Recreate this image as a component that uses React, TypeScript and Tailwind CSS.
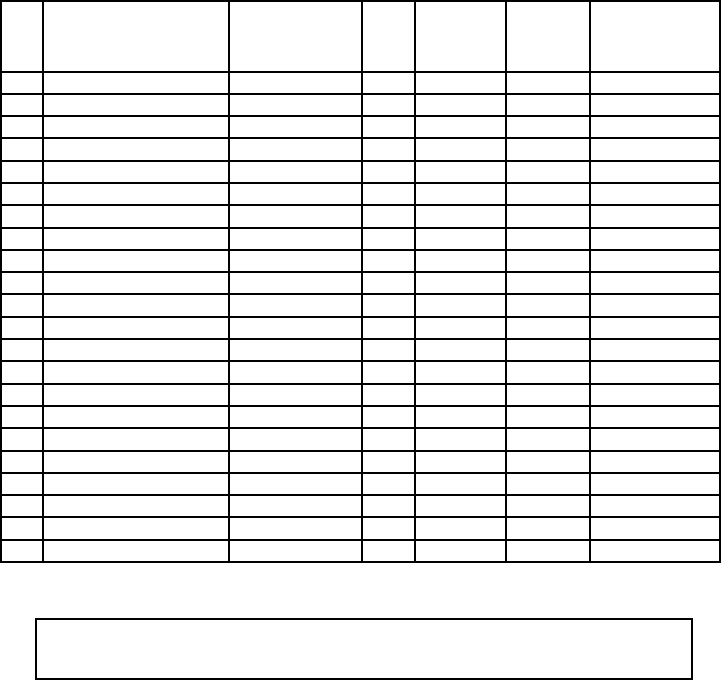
const columns = ["w-[42px]", "w-[186px]", "w-[132.5px]", "w-[53.5px]", "w-[90.5px]", "w-[84px]", "w-[130.5px]"];

const ROW_COUNT = 22;

export default function App() {
  return (
    <div className="w-[721px] h-[680px] bg-white overflow-hidden font-['Liberation_Sans',sans-serif]">
      {/* ledger grid */}
      <div className="flex flex-col w-[721px] border-l-2 border-t-2 border-black">
        <div className="flex h-[70.5px]">
          {columns.map((w, i) => (
            <div key={i} className={`${w} shrink-0 border-r-2 border-b-2 border-black box-border`} />
          ))}
        </div>
        {Array.from({ length: ROW_COUNT }).map((_, r) => (
          <div key={r} className="flex h-[22.3px]">
            {columns.map((w, i) => (
              <div key={i} className={`${w} shrink-0 border-r-2 border-b-2 border-black box-border`} />
            ))}
          </div>
        ))}
      </div>

      {/* notes box */}
      <div className="ml-[35px] mt-[54.5px] w-[658px] h-[62px] border-2 border-black box-border" />
    </div>
  );
}
